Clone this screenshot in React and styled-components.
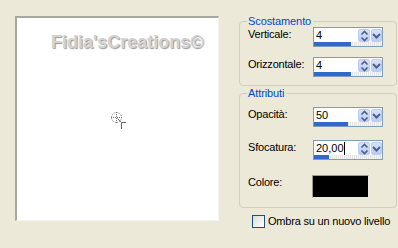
import React from "react";
import styled, { createGlobalStyle } from "styled-components";

const Global = createGlobalStyle`
  html, body { margin: 0; padding: 0; background: #ece9d8; }
  body { font-family: "Liberation Sans", Arial, sans-serif; font-size: 11px; color: #000; }
  * { box-sizing: border-box; }
`;

const Page = styled.div`
  width: 398px;
  height: 248px;
  display: flex;
  align-items: flex-start;
  padding: 15px 0 0 15px;
  background: #ece9d8;
  overflow: hidden;
`;

const Preview = styled.div`
  position: relative;
  margin-top: 1px;
  width: 204px;
  height: 205px;
  background: #fff;
  border-top: 2px solid #a9a89e;
  border-left: 2px solid #a9a89e;
  border-right: 1px solid #f4f3ee;
  border-bottom: 1px solid #f4f3ee;
  flex: none;
`;

const Watermark = styled.div`
  position: absolute;
  left: 34px;
  top: 15px;
  font: bold 18px/18px "Liberation Sans", Arial, sans-serif;
  color: #d2d2d2;
  text-shadow: 1px 1px 1px rgba(0, 0, 0, 0.4), -1px -1px 0 rgba(255, 255, 255, 0.8);
  white-space: nowrap;
`;

const Cursor = styled.svg`
  position: absolute;
  left: 92px;
  top: 93px;
`;

const Side = styled.div`
  margin-left: 20px;
  width: 158px;
  display: flex;
  flex-direction: column;
`;

const Group = styled.fieldset`
  margin: ${(p) => p.$mt || 0}px 0 0 0;
  padding: ${(p) => p.$pt || 0}px 13px ${(p) => p.$pb || 8}px 8px;
  border: 1px solid #d0d0bf;
  border-radius: 4px;
  display: flex;
  flex-direction: column;
  min-width: 0;
`;

const Legend = styled.legend`
  padding: 0 2px 0 1px;
  margin-left: -1px;
  font-size: 11px;
  line-height: 12px;
  color: #0046d5;
  letter-spacing: -0.1px;
`;

const Row = styled.div`
  display: flex;
  align-items: flex-start;
  margin-top: ${(p) => p.$mt || 0}px;
`;

const Label = styled.div`
  width: 65px;
  flex: none;
  padding-top: ${(p) => p.$pt ?? 1}px;
  line-height: 13px;
  letter-spacing: -0.2px;
  white-space: nowrap;
`;

const SpinBox = styled.div`
  width: 70px;
  height: 20px;
  border: 1px solid #7f9db9;
  background: #fff;
  display: flex;
  flex-direction: column;
`;

const SpinTop = styled.div`
  display: flex;
  height: 14px;
  align-items: stretch;
`;

const Value = styled.div`
  flex: 1;
  padding: 1px 0 0 2px;
  font-size: 11px;
  line-height: 13px;
  white-space: nowrap;
  display: flex;
  align-items: flex-start;
`;

const Caret = styled.span`
  display: inline-block;
  width: 1px;
  height: 13px;
  background: #000;
`;

const Btn = styled.div`
  width: ${(p) => p.$w}px;
  margin: 1px ${(p) => p.$mr || 0}px 0 0;
  border: 1px solid #bccdf5;
  border-radius: 2px;
  background: linear-gradient(180deg, #d6e2fd 0%, #c4d4fb 60%, #b8cbf7 100%);
  display: flex;
  align-items: center;
  justify-content: center;
`;

const Track = styled.div`
  margin-top: auto;
  height: 4px;
  background: repeating-linear-gradient(90deg, #e4e4e4 0 1px, #f6f6f6 1px 2px);
`;

const Fill = styled.div`
  height: 100%;
  background: #3169c6;
`;

const Swatch = styled.div`
  width: 57px;
  height: 23px;
  background: #000;
  border-top: 1px solid #9c9c94;
  border-left: 1px solid #9c9c94;
  border-right: 1px solid #e8e8e0;
  border-bottom: 1px solid #e8e8e0;
  margin-left: -1px;
`;

const CheckRow = styled.label`
  display: flex;
  align-items: center;
  margin: 7px 0 0 13px;
  gap: 3px;
`;

const CheckBox = styled.span`
  width: 13px;
  height: 13px;
  border: 1px solid #1c5180;
  background: linear-gradient(135deg, #dcdcd7 0%, #f5f5f2 70%, #ffffff 100%);
  flex: none;
`;

const CheckText = styled.span`
  line-height: 13px;
  letter-spacing: -0.2px;
  white-space: nowrap;
`;

const UpDownIcon = () => (
  <svg width="9" height="12" viewBox="0 0 9 12">
    <path d="M1.5 4.5 L4.5 1.5 L7.5 4.5" fill="none" stroke="#4d6185" strokeWidth="1.6" />
    <path d="M1.5 7.5 L4.5 10.5 L7.5 7.5" fill="none" stroke="#4d6185" strokeWidth="1.6" />
  </svg>
);

const DropIcon = () => (
  <svg width="9" height="8" viewBox="0 0 9 8">
    <path d="M1 2 L4.5 5.5 L8 2" fill="none" stroke="#4d6185" strokeWidth="2" />
  </svg>
);

function Spin({ value, fill, caret }) {
  return (
    <SpinBox>
      <SpinTop>
        <Value>
          {value}
          {caret && <Caret />}
        </Value>
        <Btn $w={12} $mr={1}>
          <UpDownIcon />
        </Btn>
        <Btn $w={11} $mr={0}>
          <DropIcon />
        </Btn>
      </SpinTop>
      <Track>
        <Fill style={{ width: `${fill}px` }} />
      </Track>
    </SpinBox>
  );
}

export default function App() {
  return (
    <>
      <Global />
      <Page>
        <Preview>
          <Watermark>Fidia'sCreations©</Watermark>
          <Cursor width="19" height="19" viewBox="0 0 19 19">
            <circle cx="7.5" cy="6.5" r="5" fill="none" stroke="#777" strokeWidth="1" strokeDasharray="1 1" />
            <path d="M7.5 1 V12 M2 6.5 H13" stroke="#777" strokeWidth="1" strokeDasharray="1 1" />
            <path d="M8.5 7.5 L12 11" stroke="#777" strokeWidth="1" />
            <path d="M12.5 18 V11.5 H17" fill="none" stroke="#666" strokeWidth="1" />
          </Cursor>
        </Preview>
        <Side>
          <Group $pt={0} $pb={8}>
            <Legend>Scostamento</Legend>
            <Row>
              <Label>Verticale:</Label>
              <Spin value="4" fill={37} />
            </Row>
            <Row $mt={10}>
              <Label>Orizzontale:</Label>
              <Spin value="4" fill={37} />
            </Row>
          </Group>
          <Group $mt={1} $pt={8} $pb={9}>
            <Legend>Attributi</Legend>
            <Row>
              <Label>Opacità:</Label>
              <Spin value="50" fill={34} />
            </Row>
            <Row $mt={13}>
              <Label>Sfocatura:</Label>
              <Spin value="20,00" fill={15} caret />
            </Row>
            <Row $mt={15}>
              <Label $pt={1}>Colore:</Label>
              <Swatch />
            </Row>
          </Group>
          <CheckRow>
            <CheckBox />
            <CheckText>Ombra su un nuovo livello</CheckText>
          </CheckRow>
        </Side>
      </Page>
    </>
  );
}
